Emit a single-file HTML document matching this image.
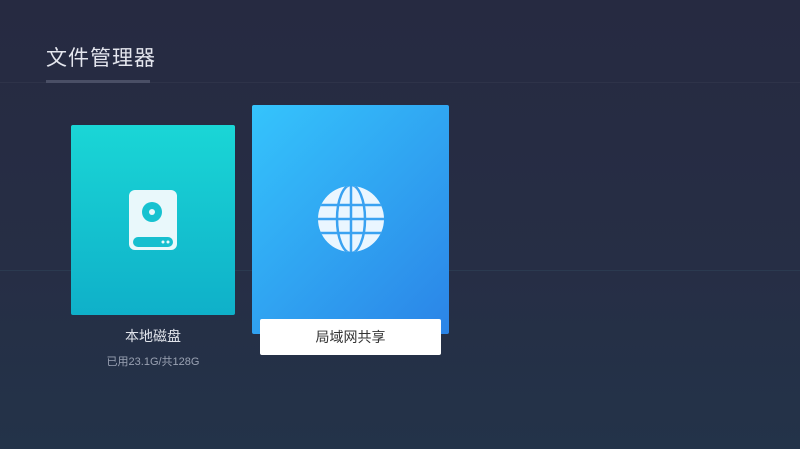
<!DOCTYPE html>
<html><head><meta charset="utf-8"><style>
body{margin:0;width:800px;height:449px;overflow:hidden;background:linear-gradient(180deg,#262a41 0%,#262e45 60%,#233349 100%);font-family:"Liberation Sans","Noto Sans CJK SC",sans-serif;position:relative}
.a{position:absolute}
</style></head><body>
<div class="a" style="left:0;top:82px;width:800px;height:1px;background:#2e3349"></div>
<div class="a" style="left:0;top:270px;width:800px;height:1px;background:#2b3a50"></div>
<div class="a" style="left:46px;top:42px;font-size:21px;color:#e4e6ee;letter-spacing:1px">文件管理器</div>
<div class="a" style="left:46px;top:80px;width:104px;height:3px;background:#4a4f66"></div>
<div class="a" style="left:71px;top:125px;width:164px;height:190px;border-radius:2px;background:linear-gradient(180deg,#1ad6d6,#0fb0c9)"></div>
<svg class="a" style="left:128px;top:189px" width="50" height="62" viewBox="0 0 50 62">
<rect x="1" y="1" width="48" height="60" rx="6" fill="#e9f8fb"/>
<circle cx="24" cy="23" r="10" fill="#16c2d0"/><circle cx="24" cy="23" r="3" fill="#e9f8fb"/>
<rect x="5" y="48" width="40" height="10" rx="5" fill="#16bfcf"/>
<circle cx="35" cy="53" r="1.5" fill="#e9f8fb"/><circle cx="40" cy="53" r="1.5" fill="#e9f8fb"/>
</svg>
<div class="a" style="left:71px;top:326px;width:164px;text-align:center;font-size:14px;color:#e0e3ea">本地磁盘</div>
<div class="a" style="left:71px;top:353px;width:164px;text-align:center;font-size:11px;color:#9aa2b3">已用23.1G/共128G</div>
<div class="a" style="left:252px;top:105px;width:197px;height:229px;border-radius:2px;background:linear-gradient(135deg,#35c4fc,#2b84e7)"></div>
<svg class="a" style="left:317px;top:185px" width="68" height="68" viewBox="0 0 68 68">
<defs><clipPath id="c"><circle cx="34" cy="34" r="33"/></clipPath></defs>
<circle cx="34" cy="34" r="33" fill="#eaf6ff"/>
<g clip-path="url(#c)" stroke="#3aa2f1" stroke-width="2.5" fill="none">
<ellipse cx="34" cy="34" rx="14" ry="34"/><line x1="34" y1="0" x2="34" y2="68"/>
<line x1="0" y1="34" x2="68" y2="34"/><line x1="0" y1="20" x2="68" y2="20"/><line x1="0" y1="48" x2="68" y2="48"/>
</g></svg>
<div class="a" style="left:260px;top:319px;width:181px;height:36px;background:#fff;border-radius:2px;text-align:center;line-height:36px;font-size:14px;color:#333">局域网共享</div>
</body></html>
